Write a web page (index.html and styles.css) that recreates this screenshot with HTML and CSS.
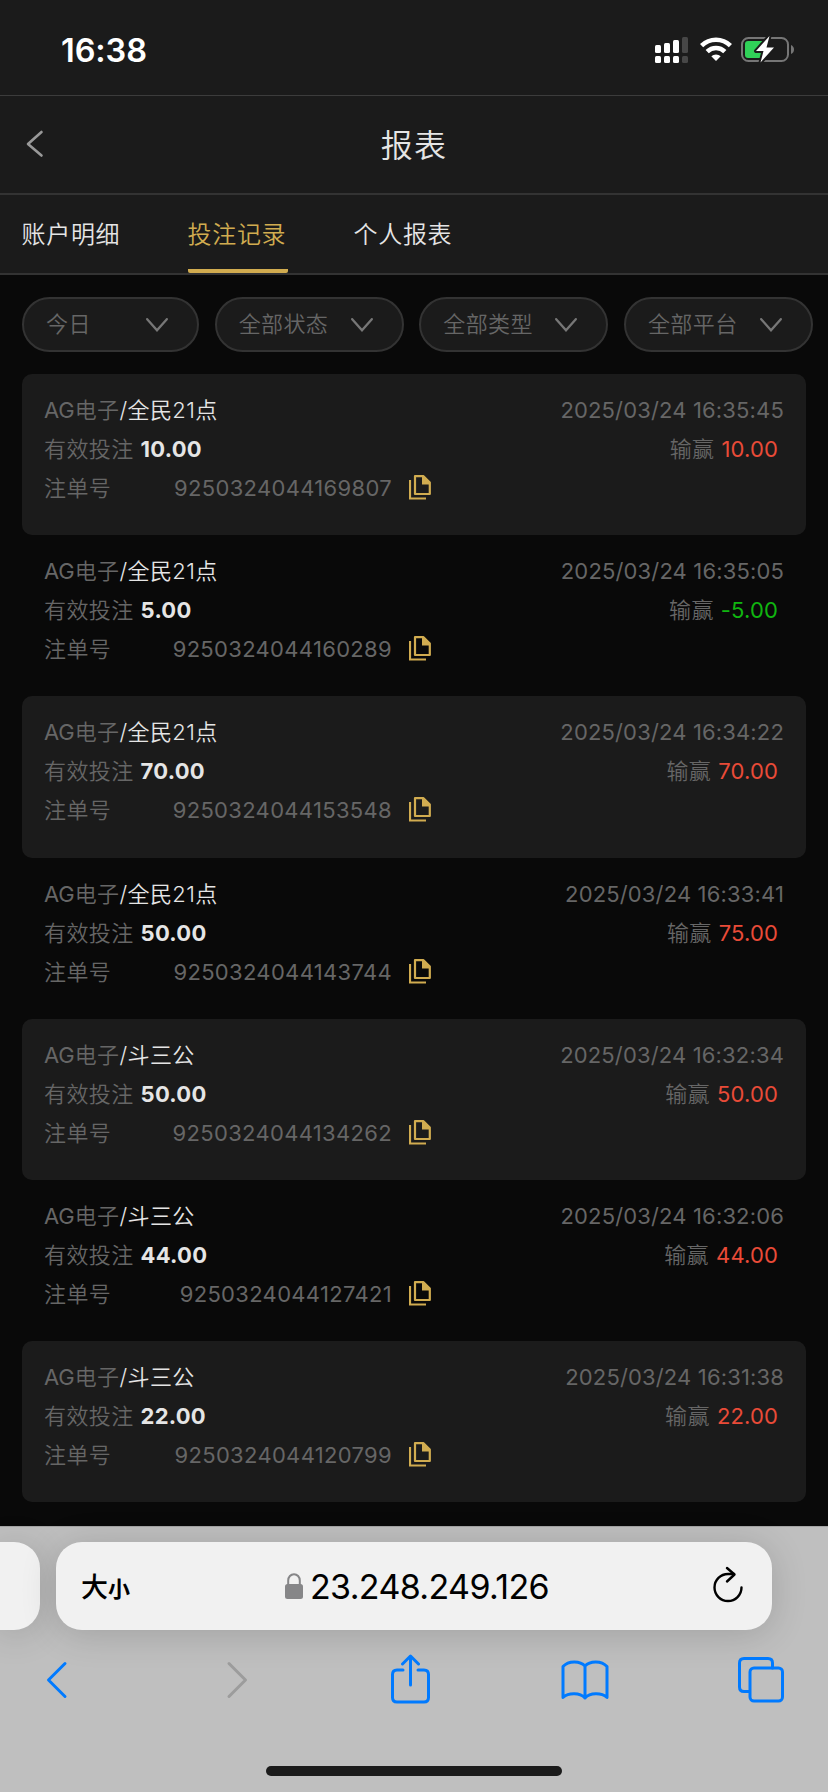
FILE: index.html
```html
<!DOCTYPE html>
<html lang="zh-CN">
<head>
<meta charset="utf-8">
<title>报表</title>
<link rel="stylesheet" href="styles.css">
</head>
<body>
<svg class="defs" width="0" height="0">
  <symbol id="copy" viewBox="0 0 22 25"><path d="M1 5v18.500h16" fill="none" stroke="currentColor" stroke-width="2.200"/><path d="M6 1.200h8.500L20.800 7.500V19H6z" fill="none" stroke="currentColor" stroke-width="2.200" stroke-linejoin="round"/><path d="M13 1h2l6 6v2.500h-8z" fill="currentColor"/></symbol>
  <symbol id="down" viewBox="0 0 22 14"><path d="M1.200 1.200L11 12.300 20.800 1.200" fill="none" stroke="currentColor" stroke-width="2.300" stroke-linecap="round"/></symbol>
</svg>
<div class="screen">
  <div class="status">
    <span class="time">16:38</span>
    <div class="status-icons">
      <svg class="signal" viewBox="0 0 33 26" width="33" height="26"><g fill="#fff"><rect x="0" y="8" width="6" height="8" rx="1.500"/><rect x="9" y="6" width="6" height="10" rx="1.500"/><rect x="18" y="3" width="6" height="13" rx="1.500"/><rect x="0" y="19" width="6" height="7" rx="1.500"/><rect x="9" y="19" width="6" height="7" rx="1.500"/><rect x="18" y="19" width="6" height="7" rx="1.500"/></g><g fill="#474747"><rect x="27" y="0" width="6" height="16" rx="1.500"/><rect x="27" y="19" width="6" height="7" rx="1.500"/></g></svg>
      <svg class="wifi" viewBox="0 0 32 24" width="32" height="24"><g fill="none" stroke="#fff" stroke-width="4.500"><path d="M1.600 8.600a20.500 20.500 0 0 1 28.800 0"/><path d="M7.200 14.700a12.500 12.500 0 0 1 17.600 0"/></g><path d="M11.300 19.300a6.800 6.800 0 0 1 9.400 0L16 24z" fill="#fff"/></svg>
      <svg class="battery" viewBox="0 0 54 28" width="54" height="28"><rect x="1" y="3" width="46" height="23" rx="6.500" fill="none" stroke="#767676" stroke-width="2"/><path d="M50 10q3 1.500 3 4.500t-3 4.500z" fill="#767676"/><path d="M7 6h14v17H7q-3 0-3-3V9q0-3 3-3z" fill="#30d158"/><path d="M28.500 1L15 16h7.500L19.500 27.500 33 12.500h-7.500z" fill="#fff" stroke="#1b1b1b" stroke-width="4" paint-order="stroke" stroke-linejoin="round"/></svg>
    </div>
  </div>
  <header class="header">
    <svg class="back" viewBox="0 0 18 28" width="18" height="28"><path d="M15.500 2L2 14l13.500 11.500" fill="none" stroke="#999" stroke-width="2.600" stroke-linecap="round" stroke-linejoin="round"/></svg>
    <h1 class="title">报表</h1>
  </header>
  <nav class="tabs">
    <span class="tab">账户明细</span>
    <span class="tab active">投注记录</span>
    <span class="tab">个人报表</span>
  </nav>
  <main class="content">
    <div class="filters">
      <div class="filter today"><span>今日</span><svg class="down"><use href="#down"/></svg></div>
      <div class="filter"><span>全部状态</span><svg class="down"><use href="#down"/></svg></div>
      <div class="filter"><span>全部类型</span><svg class="down"><use href="#down"/></svg></div>
      <div class="filter"><span>全部平台</span><svg class="down"><use href="#down"/></svg></div>
    </div>
    <div class="records">
      <article class="record">
        <div class="row"><span><span class="ag">AG</span>电子<span class="game">/全民21点</span></span><span class="date">2025/03/24 16:35:45</span></div>
        <div class="row"><span>有效投注<b class="stake">10.00</b></span><span class="result">输赢<span class="amount win">10.00</span></span></div>
        <div class="row order"><span>注单号</span><span class="number">9250324044169807</span><svg class="copy"><use href="#copy"/></svg></div>
      </article>
      <article class="record">
        <div class="row"><span><span class="ag">AG</span>电子<span class="game">/全民21点</span></span><span class="date">2025/03/24 16:35:05</span></div>
        <div class="row"><span>有效投注<b class="stake">5.00</b></span><span class="result">输赢<span class="amount loss">-5.00</span></span></div>
        <div class="row order"><span>注单号</span><span class="number">9250324044160289</span><svg class="copy"><use href="#copy"/></svg></div>
      </article>
      <article class="record">
        <div class="row"><span><span class="ag">AG</span>电子<span class="game">/全民21点</span></span><span class="date">2025/03/24 16:34:22</span></div>
        <div class="row"><span>有效投注<b class="stake">70.00</b></span><span class="result">输赢<span class="amount win">70.00</span></span></div>
        <div class="row order"><span>注单号</span><span class="number">9250324044153548</span><svg class="copy"><use href="#copy"/></svg></div>
      </article>
      <article class="record">
        <div class="row"><span><span class="ag">AG</span>电子<span class="game">/全民21点</span></span><span class="date">2025/03/24 16:33:41</span></div>
        <div class="row"><span>有效投注<b class="stake">50.00</b></span><span class="result">输赢<span class="amount win">75.00</span></span></div>
        <div class="row order"><span>注单号</span><span class="number">9250324044143744</span><svg class="copy"><use href="#copy"/></svg></div>
      </article>
      <article class="record">
        <div class="row"><span><span class="ag">AG</span>电子<span class="game">/斗三公</span></span><span class="date">2025/03/24 16:32:34</span></div>
        <div class="row"><span>有效投注<b class="stake">50.00</b></span><span class="result">输赢<span class="amount win">50.00</span></span></div>
        <div class="row order"><span>注单号</span><span class="number">9250324044134262</span><svg class="copy"><use href="#copy"/></svg></div>
      </article>
      <article class="record">
        <div class="row"><span><span class="ag">AG</span>电子<span class="game">/斗三公</span></span><span class="date">2025/03/24 16:32:06</span></div>
        <div class="row"><span>有效投注<b class="stake">44.00</b></span><span class="result">输赢<span class="amount win">44.00</span></span></div>
        <div class="row order"><span>注单号</span><span class="number">9250324044127421</span><svg class="copy"><use href="#copy"/></svg></div>
      </article>
      <article class="record">
        <div class="row"><span><span class="ag">AG</span>电子<span class="game">/斗三公</span></span><span class="date">2025/03/24 16:31:38</span></div>
        <div class="row"><span>有效投注<b class="stake">22.00</b></span><span class="result">输赢<span class="amount win">22.00</span></span></div>
        <div class="row order"><span>注单号</span><span class="number">9250324044120799</span><svg class="copy"><use href="#copy"/></svg></div>
      </article>
    </div>
  </main>
  <footer class="browser">
    <div class="address-row">
      <div class="previous-tab"></div>
      <div class="address">
        <span class="text-size">大<small>小</small></span>
        <span class="url"><svg viewBox="0 0 18 26" width="18" height="26"><path d="M3.200 13V7.500a5.800 6.300 0 0 1 11.600 0V13" fill="none" stroke="#868688" stroke-width="2"/><rect y="11" width="18" height="15" rx="2.500" fill="#868688"/></svg><span>23.248.249.126</span></span>
        <svg class="reload" viewBox="0 0 32 38" width="32" height="38"><g fill="none" stroke="#000" stroke-width="2.400" stroke-linecap="round" stroke-linejoin="round"><path d="M29.500 21.500A13.500 13.500 0 1 1 16 8h6"/><path d="M15 2l7.500 6.500-7.500 7"/></g></svg>
      </div>
    </div>
    <div class="toolbar">
      <svg viewBox="0 0 22 38" width="22" height="38"><path d="M19 2.500L2.500 19 19 35.500" class="line"/></svg>
      <svg viewBox="0 0 22 38" width="22" height="38"><path d="M3 2.500L19.500 19 3 35.500" class="line off"/></svg>
      <svg class="share" viewBox="0 0 40 50" width="40" height="50"><path d="M12 16H6q-4.500 0-4.500 4.500v23Q1.500 48 6 48h27q4.500 0 4.500-4.500v-23Q37.500 16 33 16h-6M19.500 31V2.500M11.500 10l8-8 8 8" class="line"/></svg>
      <svg viewBox="0 0 48 40" width="48" height="40"><path d="M24 38V6C19 .5 7.500.5 2 6.500V37.500C7.500 32.500 19 32.500 24 38 29 32.500 40.500 32.500 46 37.500V6.500C40.500.5 29 .5 24 6" class="line"/></svg>
      <svg viewBox="0 0 46 46" width="46" height="46"><path d="M11 34.500H6q-4.500 0-4.500-4.500V6q0-4.500 4.500-4.500h24q4.500 0 4.500 4.500v5" class="line"/><rect x="12" y="11" width="32.500" height="33" rx="4" class="line"/></svg>
    </div>
    <div class="home"></div>
  </footer>
</div>
</body>
</html>
```
FILE: styles.css
```css
* { box-sizing: border-box; }
body {
  margin: 0;
  background: #090909;
  font-family: Inter, "Noto Sans CJK SC", sans-serif;
}
svg { display: block; flex: none; }
.defs { position: absolute; }
.screen {
  width: 828px;
  height: 1792px;
  display: flex;
  flex-direction: column;
  overflow: hidden;
}
.status {
  height: 96px;
  flex: none;
  display: flex;
  justify-content: space-between;
  padding: 0 33px 0 61px;
  background: #1b1b1b;
  border-bottom: 1px solid #3c3c3c;
}
.time {
  color: #fff;
  font-size: 32.500px;
  font-weight: 600;
  line-height: 101px;
  letter-spacing: -.1px;
}
.status-icons { display: flex; gap: 12px; padding-top: 37px; }
.battery { margin: -2px 0 0 -3px; }
.header {
  height: 99px;
  flex: none;
  display: grid;
  grid-template-columns: 100px 1fr 100px;
  background: #1b1b1b;
  border-bottom: 2px solid #333;
}
.back { margin: 34px 0 0 26px; }
.title {
  margin: 0;
  color: #e5e5e5;
  font-size: 32px;
  font-weight: 350;
  line-height: 99px;
  letter-spacing: 1.300px;
  text-align: center;
}
.tabs {
  height: 80px;
  flex: none;
  display: flex;
  gap: 66px;
  padding-left: 22px;
  background: #1b1b1b;
  border-bottom: 2px solid #333;
}
.tab {
  width: 100px;
  height: 78px;
  color: #e5e5e5;
  font-size: 24px;
  font-weight: 350;
  line-height: 80px;
  letter-spacing: .7px;
  text-indent: -.5px;
}
.active {
  color: #d1ac50;
  background: linear-gradient(#d1ac50, #d1ac50) bottom / 100% 4px no-repeat;
  border-radius: 0 0 2px 2px;
}
.content { height: 1251px; flex: none; padding: 22px 15px 0 22px; }
.filters { display: flex; justify-content: space-between; }
.filter {
  width: 189px;
  height: 55px;
  display: flex;
  align-items: center;
  justify-content: space-between;
  padding: 0 29px 0 22px;
  border: 2px solid #333;
  border-radius: 28px;
  background: #1b1b1b;
  color: #666;
  font-size: 22px;
  font-weight: 350;
  letter-spacing: .4px;
}
.filter span { padding-bottom: 5px; }
.today { width: 177px; }
.down { width: 22px; height: 14px; color: #777; }
.records { margin-top: 22px; width: 784px; }
.record {
  height: 161.2px;
  padding: 17px 22px 0;
  border-radius: 10px;
  color: #666;
  font-size: 22px;
  font-weight: 350;
  letter-spacing: .4px;
}
.record:nth-child(odd) { background: #1b1b1b; }
.row {
  height: 39px;
  display: flex;
  justify-content: space-between;
  line-height: 39px;
  white-space: nowrap;
}
.game { color: #e5e5e5; }
.ag { font-weight: 400; letter-spacing: -.1px; }
.date { font-weight: 400; letter-spacing: .15px; }
.stake {
  margin-left: 7px;
  color: #e5e5e5;
  font-weight: 700;
  letter-spacing: .25px;
}
.result { padding-right: 6px; }
.amount { margin-left: 7px; letter-spacing: .15px; font-weight: 400; }
.win { color: #e94b38; }
.loss { color: #10b510; }
.order { justify-content: flex-start; }
.order > span:first-child { width: 80px; }
.order > .number {
  width: 268px;
  text-align: right;
  font-weight: 400;
  letter-spacing: .32px;
}
.copy { width: 22px; height: 25px; margin: 6px 0 0 17px; color: #d1ac50; }
.browser {
  height: 266px;
  flex: none;
  padding-top: 15px;
  border-top: 1px solid #a4a4a4;
  background: #bfbfbf;
}
.address-row { display: flex; gap: 16px; height: 88px; }
.previous-tab, .address {
  background: #f1f1f1;
  box-shadow: 0 4px 36px rgba(0, 0, 0, .16);
}
.previous-tab { width: 40px; border-radius: 0 26px 26px 0; }
.address {
  width: 716px;
  border-radius: 26px;
  display: grid;
  grid-template-columns: 204px 1fr 32px;
  align-items: center;
  padding: 0 28px 0 25px;
}
.text-size { padding-bottom: 2px; font-size: 27px; font-weight: 500; }
.text-size small { font-size: 22px; font-weight: 700; }
.url {
  display: flex;
  align-items: center;
  gap: 7px;
  font-size: 34px;
  letter-spacing: -.64px;
}
.reload { margin-top: -2px; }
.toolbar {
  display: grid;
  grid-template-columns: 179.5px 165.5px 169.5px 177.5px 46px;
  align-items: center;
  height: 100px;
  padding-left: 46px;
}
.share { margin-top: -2px; }
.line {
  fill: none;
  stroke: #007aff;
  stroke-width: 3;
  stroke-linecap: round;
  stroke-linejoin: round;
}
.off { stroke: #9c9c9c; }
.home {
  width: 296px;
  height: 10px;
  margin: 36px 0 0 266px;
  border-radius: 5px;
  background: #1b1b1b;
}
```
